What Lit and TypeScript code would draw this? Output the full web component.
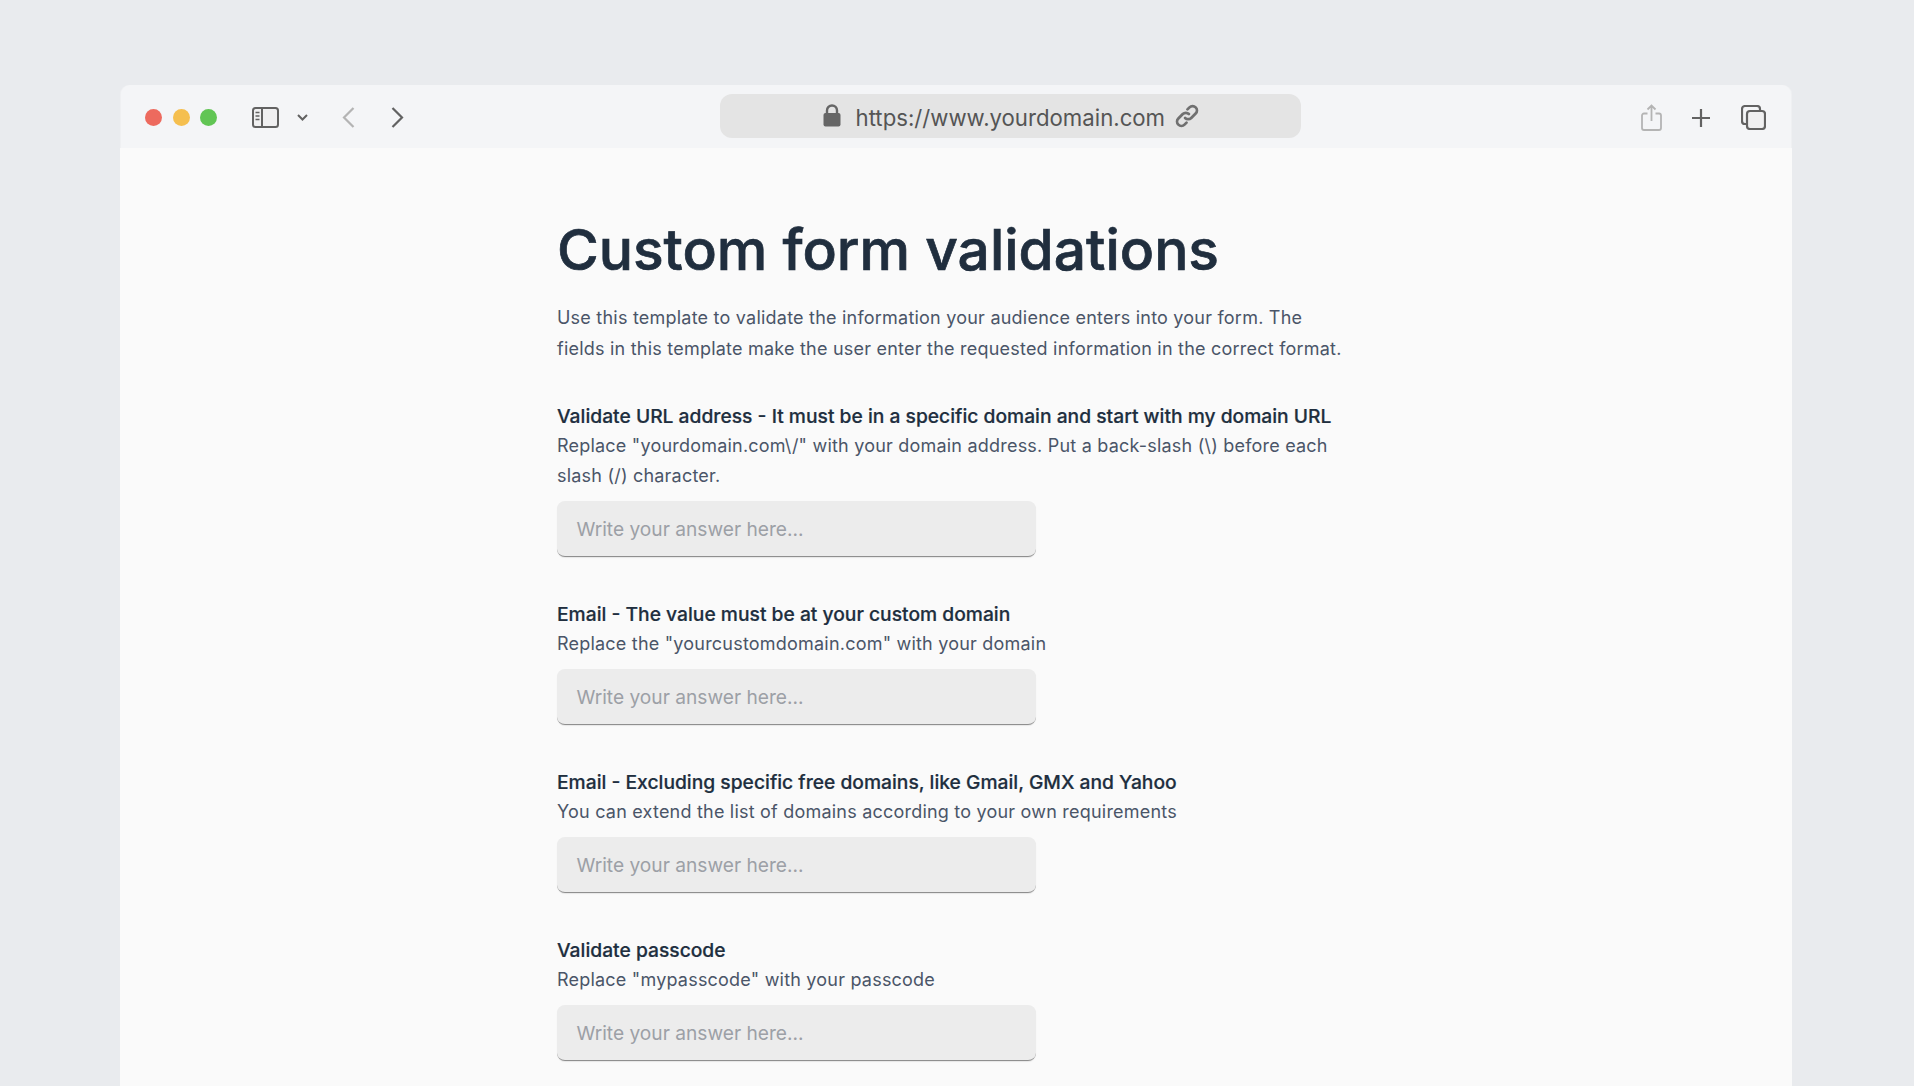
import { LitElement, html, css } from "lit";
import { customElement } from "lit/decorators.js";

const fields = [
  { t: "Validate URL address - It must be in a specific domain and start with my domain URL", s: 'Replace "yourdomain.com\\/" with your domain address. Put a back-slash (\\) before each slash (/) character.' },
  { t: "Email - The value must be at your custom domain", s: 'Replace the "yourcustomdomain.com" with your domain' },
  { t: "Email - Excluding specific free domains, like Gmail, GMX and Yahoo", s: "You can extend the list of domains according to your own requirements" },
  { t: "Validate passcode", s: 'Replace "mypasscode" with your passcode' },
];

@customElement("app-root")
export class AppRoot extends LitElement {
  static styles = css`
    :host { display: block; height: 1086px; overflow: hidden; background: #e9ebee; font-family: Inter, "Liberation Sans", sans-serif; }
    .win { width: 1672px; margin-left: 120px; padding-top: 85px; }
    .bar { height: 63px; box-sizing: border-box; padding-top: 2px; margin: 0 1px; background: #f4f5f7; border-radius: 9px 9px 0 0; display: flex; align-items: center; color: #626262; box-shadow: -1px 0 0 #eff0f2, 1px 0 0 #eff0f2; }
    .bar > * { flex: none; }
    .dots { display: flex; gap: 10.5px; margin-left: 24px; }
    .dot { width: 17px; height: 17px; border-radius: 50%; }
    .r { background: #ed6a5e; } .y { background: #f5bf4f; } .g { background: #61c554; }
    svg { display: block; fill: none; stroke: currentColor; flex: none; }
    .side { margin-left: 35px; }
    .chev { margin-left: 18px; }
    .back { margin-left: 34px; color: #b4b4b4; }
    .fwd { margin-left: 35.5px; }
    .url { margin-left: 316.8px; width: 581px; height: 44px; border-radius: 12px; background: #e4e4e4; display: flex; align-items: center; justify-content: center; gap: 9px; color: #555; font-size: 22.2px; margin-top: -4px; }
    .url span { margin-left: 3px; padding-top: 3px; }
    .url .lock { color: #666; margin-right: 3px; margin-left: 0; }
    .url .link { color: #707070; margin-top: 1px; margin-left: 1px; }
    .share { margin-left: 340px; color: #b4b4b4; }
    .plus { margin-left: 28.5px; }
    .tabs { margin-left: 30px; }
    .page { height: 940px; background: #fafafa; padding: 65px 0 0 437px; box-sizing: border-box; }
    .col { width: 790px; }
    h1 { margin: 0; font-size: 56.9px; line-height: 74px; font-weight: 500; -webkit-text-stroke: 0.7px #202e3e; color: #202e3e; }
    .desc { margin: 16px 0 0; font-size: 18px; line-height: 30.5px; color: #4a5568; letter-spacing: 0.22px; }
    .field { margin-top: 42px; }
    .field.first { margin-top: 37px; }
    .t { font-size: 19.25px; line-height: 29px; padding-top: 1px; font-weight: 500; -webkit-text-stroke: 0.2px #202e3e; color: #202e3e; }
    .s { font-size: 18px; line-height: 30px; color: #4a5568; letter-spacing: 0.21px; }
    .inp { margin-top: 10px; width: 479px; height: 56px; box-sizing: border-box; background: #ececec; border-bottom: 1px solid #8f8f8f; border-radius: 8px; padding: 1px 0 0 19.5px; display: flex; align-items: center; font-size: 19.15px; color: #9ca0a6; box-shadow: 0 1px 1px rgba(0,0,0,.08); }
  `;

  render() {
    return html`<div class="win">
      <div class="bar">
        <div class="dots"><div class="dot r"></div><div class="dot y"></div><div class="dot g"></div></div>
        <svg class="side" width="27" height="21" viewBox="0 0 27 21" stroke-width="2"><rect x="1" y="1" width="25" height="19" rx="2.5" fill="#f0f0f1"/><path d="M10 1v19"/><path d="M3.5 5.5h4M3.5 9h4M3.5 12.5h4" stroke-width="1.6"/></svg>
        <svg class="chev" width="11" height="7" viewBox="0 0 11 7" stroke-width="2"><path d="M1 1l4.5 4.5L10 1"/></svg>
        <svg class="back" width="13" height="21" viewBox="0 0 13 21" stroke-width="2.2"><path d="M11.5 1L2 10.5 11.5 20"/></svg>
        <svg class="fwd" width="13" height="21" viewBox="0 0 13 21" stroke-width="2.2"><path d="M1.5 1L11 10.5 1.5 20"/></svg>
        <div class="url">
          <svg class="lock" width="18" height="23" viewBox="0 0 18 23" stroke-width="2.4"><path d="M4 10V6.5a5 5 0 0 1 10 0V10"/><rect x="0.5" y="9" width="17" height="13.5" rx="2" fill="currentColor" stroke="none"/></svg>
          <span>https://www.yourdomain.com</span>
          <svg class="link" width="24" height="24" viewBox="0 0 25 25" stroke-width="2.9" stroke-linecap="round"><path d="M10.5 14.5a4.5 4.5 0 0 0 6.4 0l4.6-4.6a4.5 4.5 0 0 0-6.4-6.4l-2.1 2.1"/><path d="M14.5 10.5a4.5 4.5 0 0 0-6.4 0l-4.6 4.6a4.5 4.5 0 0 0 6.4 6.4l2.1-2.1"/></svg>
        </div>
        <svg class="share" width="21" height="27" viewBox="0 0 21 27" stroke-width="1.8"><path d="M6.5 9.5H3a2 2 0 0 0-2 2V24a2 2 0 0 0 2 2h15a2 2 0 0 0 2-2V11.5a2 2 0 0 0-2-2h-3.5"/><path d="M10.5 17V1.5M6.5 5.5l4-4 4 4"/></svg>
        <svg class="plus" width="20" height="20" viewBox="0 0 20 20" stroke-width="2.2"><path d="M10 1v18M1 10h18"/></svg>
        <svg class="tabs" width="25" height="25" viewBox="0 0 25 25" stroke-width="2.2"><path d="M5 19H4a3 3 0 0 1-3-3V4a3 3 0 0 1 3-3h12a3 3 0 0 1 3 3v1"/><rect x="6" y="6" width="18" height="18" rx="3" fill="#f0f0f1"/></svg>
      </div>
      <div class="page"><div class="col">
        <h1>Custom form validations</h1>
        <p class="desc">Use this template to validate the information your audience enters into your form. The fields in this template make the user enter the requested information in the correct format.</p>
        ${fields.map((f, i) => html`<div class="field ${i === 0 ? "first" : ""}">
          <div class="t">${f.t}</div>
          <div class="s">${f.s}</div>
          <div class="inp">Write your answer here...</div>
        </div>`)}
      </div></div>
    </div>`;
  }
}
